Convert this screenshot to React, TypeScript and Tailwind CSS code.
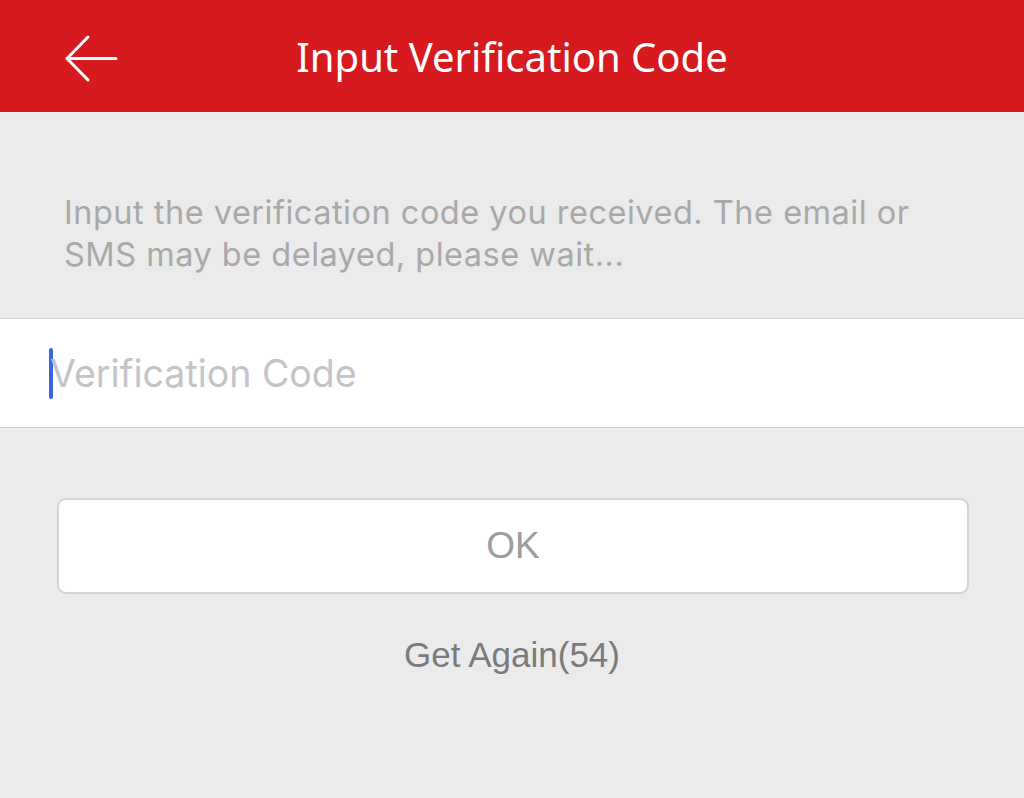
import React from "react";

export default function App() {
  return (
    <div className="w-[1024px] h-[798px] bg-[#ebebeb] flex flex-col overflow-hidden" style={{ fontFamily: "Inter, 'Noto Sans', sans-serif" }}>
      <div className="h-[112px] bg-[#d71920] flex items-center relative shrink-0">
        <svg className="absolute left-[64px] top-[34px]" width="54" height="50" viewBox="0 0 54 50" fill="none">
          <path d="M52 24.5 H3 M24 3 L3 24.5 L24 46" stroke="white" strokeWidth="3" strokeLinecap="round" strokeLinejoin="round" />
        </svg>
        <div className="w-full text-center text-white text-[40px] leading-none pt-[2px]" style={{ fontFamily: "'Noto Sans', sans-serif" }}>
          Input Verification Code
        </div>
      </div>
      <div className="h-[206px] pl-[64px] pr-[40px] pt-[80px] text-[#a9a9a9] text-[32.5px] leading-[42px] tracking-[0.5px] shrink-0">
        Input the verification code you received. The email or SMS may be delayed, please wait...
      </div>
      <div className="h-[110px] bg-white border-y border-[#cfcfcf] flex items-center pl-[49px] shrink-0">
        <div className="w-[4px] h-[51px] rounded-full bg-[#3b63e6]" />
        <span className="text-[37.5px] text-[#c4c4c8] -ml-[3px] pt-[3px]">Verification Code</span>
      </div>
      <div className="pl-[57px] pr-[55px] pt-[70px] shrink-0">
        <div className="h-[96px] bg-white border-2 border-[#d4d4d4] rounded-[9px] flex items-center justify-center text-[37px] text-[#9d9d9d]" style={{ fontFamily: "'Liberation Sans', Arial, sans-serif" }}>
          OK
        </div>
      </div>
      <div className="text-center text-[35px] text-[#7b7b7b] pt-[43px] leading-none" style={{ fontFamily: "'Liberation Sans', Arial, sans-serif" }}>
        Get Again(54)
      </div>
    </div>
  );
}
